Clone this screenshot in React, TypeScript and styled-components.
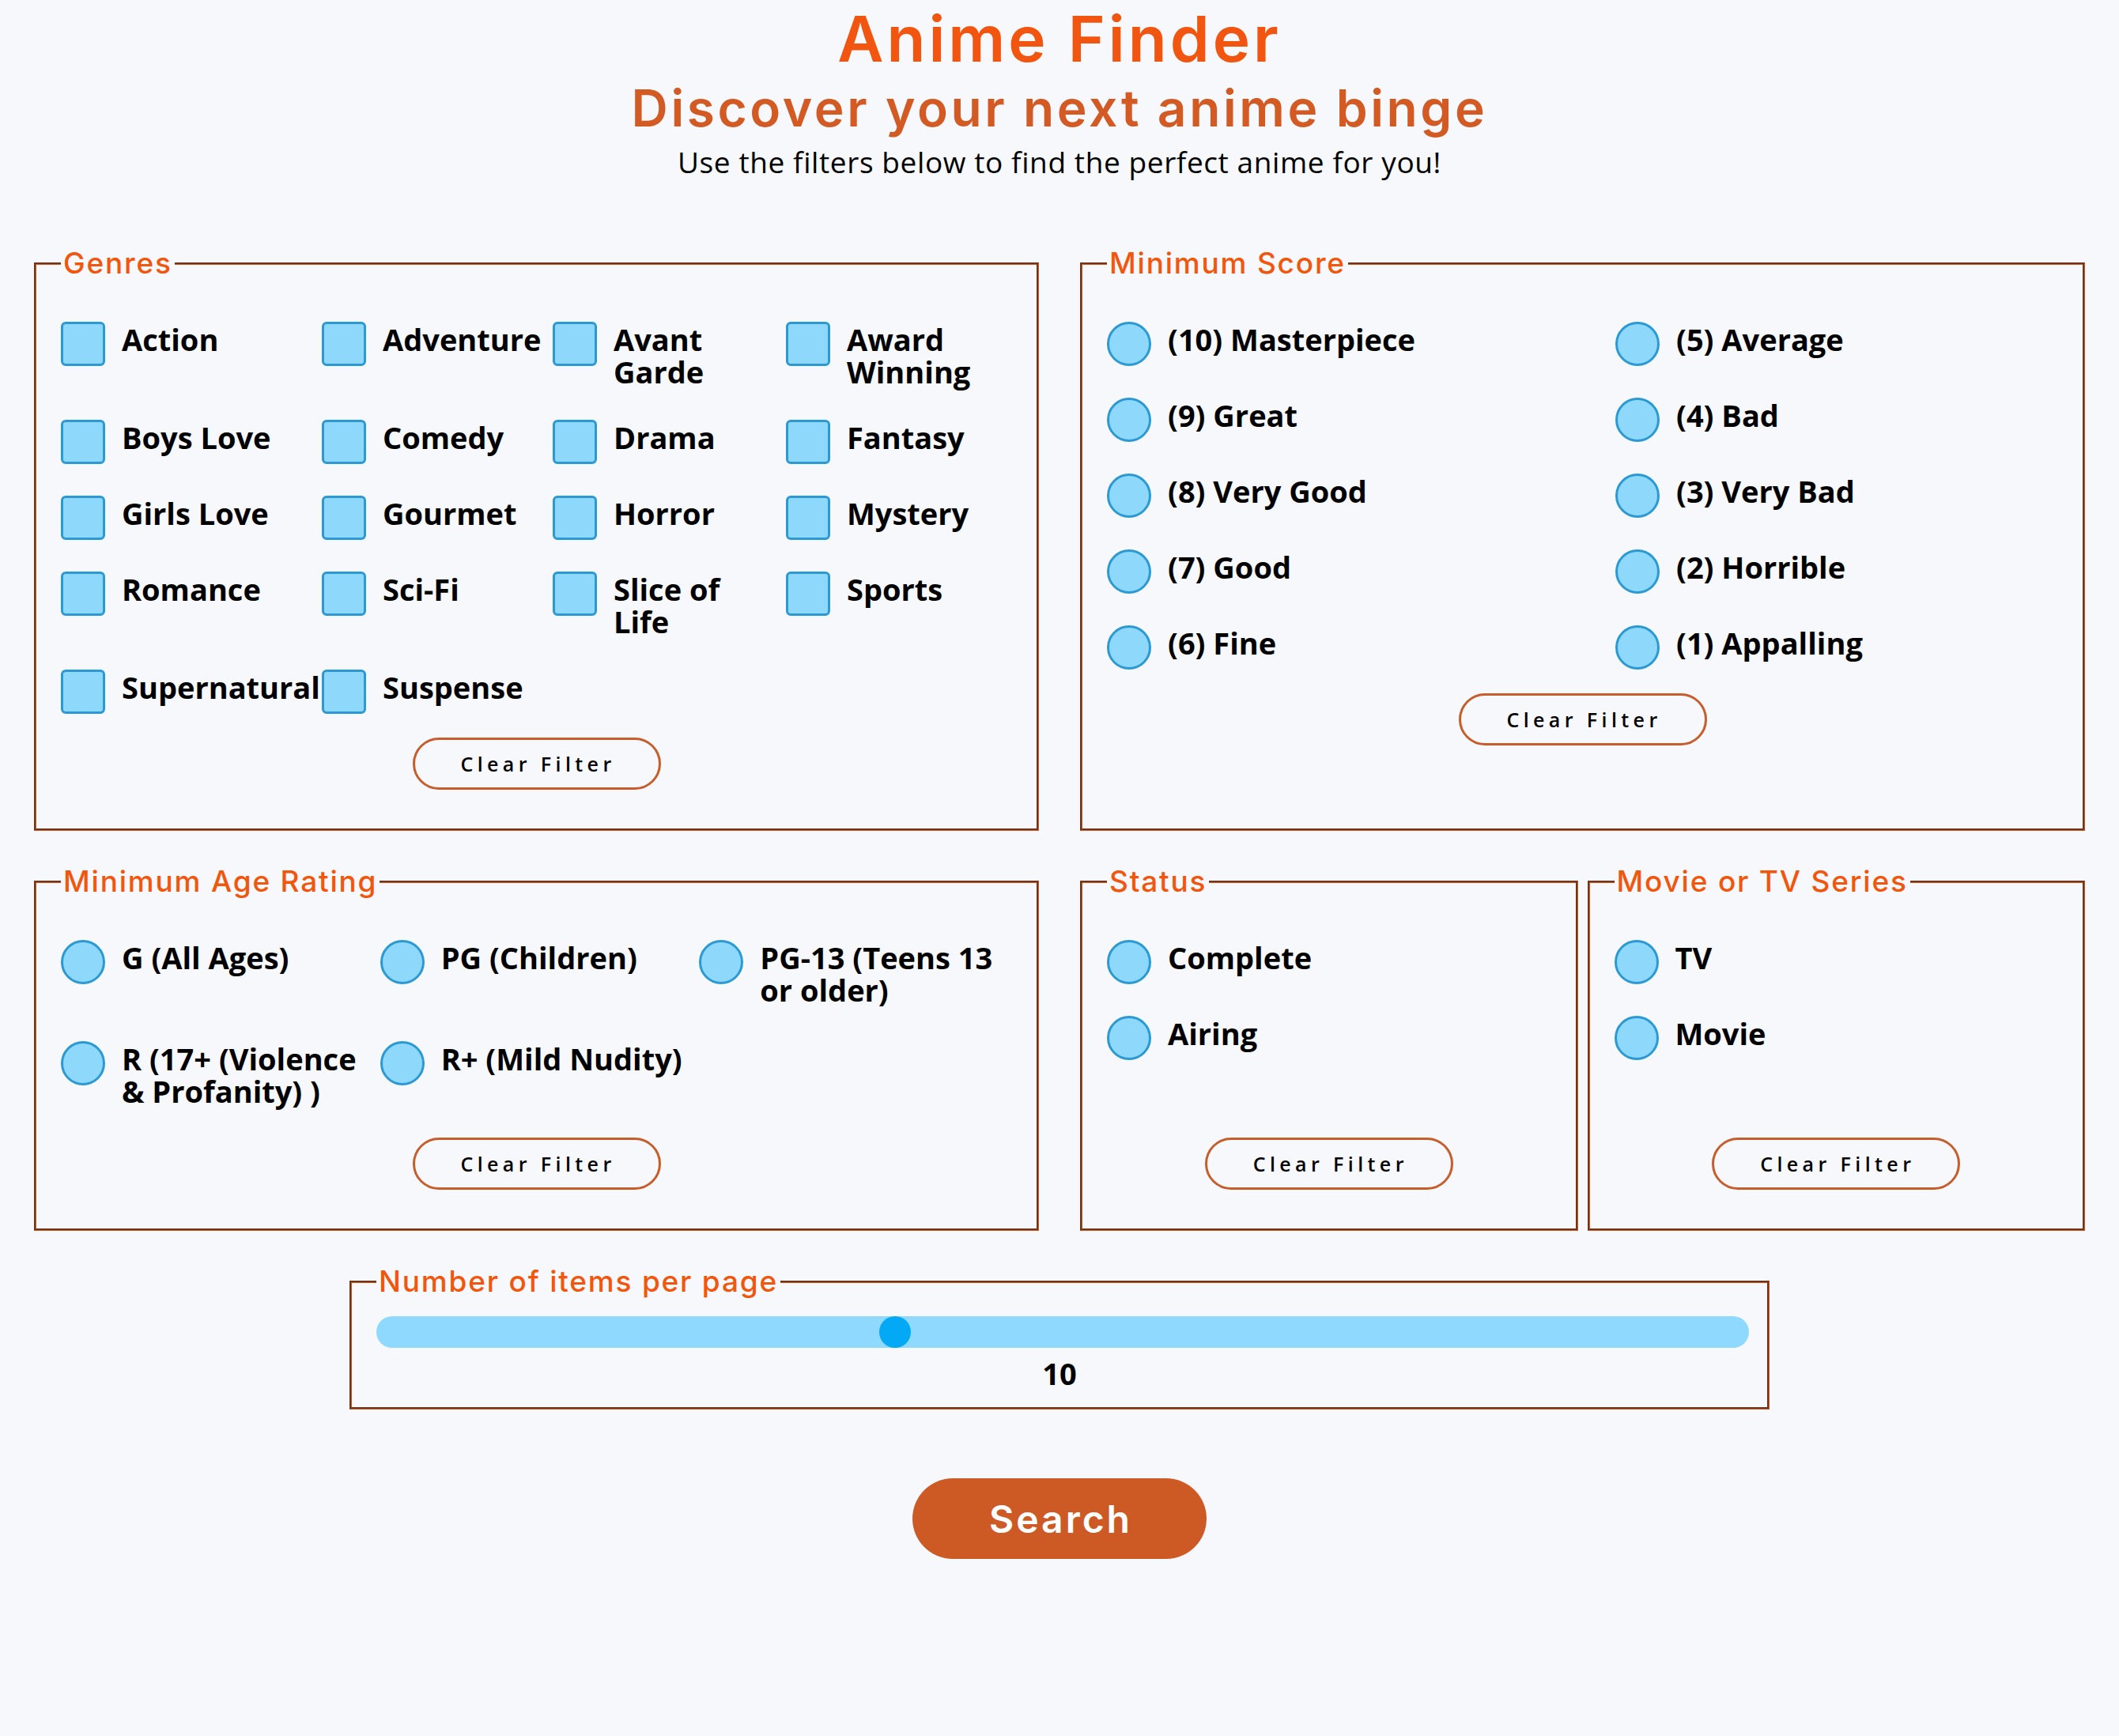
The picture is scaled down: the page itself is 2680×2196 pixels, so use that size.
import React, { useState } from 'react';
import styled, { createGlobalStyle, css } from 'styled-components';

const GlobalStyle = createGlobalStyle`
  html, body {
    margin: 0;
    padding: 0;
    background: #f7f8fc;
  }
  body {
    font-family: 'Open Sans', 'Noto Sans', sans-serif;
    color: #000;
  }
  *, *::before, *::after {
    box-sizing: border-box;
  }
`;

const Page = styled.main`
  display: flex;
  flex-direction: column;
  padding: 2px 43px 120px;
`;

const Header = styled.header`
  display: flex;
  flex-direction: column;
  align-items: center;
  text-align: center;
  margin-bottom: 86px;
`;

const Title = styled.h1`
  margin: 0;
  font-family: Inter, 'Open Sans', sans-serif;
  font-weight: 600;
  font-size: 80px;
  line-height: 93px;
  letter-spacing: 4px;
  color: #f2550f;
`;

const Subtitle = styled.h2`
  margin: 4px 0 0;
  font-family: Inter, 'Open Sans', sans-serif;
  font-weight: 600;
  font-size: 64px;
  line-height: 75px;
  letter-spacing: 3.6px;
  color: #d35a22;
`;

const Intro = styled.p`
  margin: 9px 0 0;
  font-family: 'Open Sans', sans-serif;
  font-weight: 400;
  font-size: 37px;
  line-height: 44px;
  letter-spacing: 0.6px;
`;

const Filters = styled.div`
  display: flex;
  flex-direction: column;
  gap: 44px;
`;

const FilterRow = styled.div`
  display: grid;
  grid-template-columns: 1fr 1fr;
  column-gap: 52px;
  align-items: stretch;
`;

const Pair = styled.div`
  display: flex;
  gap: 12px;
  align-items: stretch;
  & > fieldset {
    flex: 1 1 0;
  }
`;

const Panel = styled.fieldset`
  margin: 0;
  min-width: 0;
  border: 3px groove #c65a28;
  padding: 54px 31px 49px;
  display: flex;
  flex-direction: column;
`;

const SliderPanel = styled(Panel)`
  align-self: center;
  width: 1796px;
  padding: 24px 23px 22px 31px;
`;

const Legend = styled.legend`
  padding: 0 3px;
  font-family: Inter, 'Open Sans', sans-serif;
  font-weight: 500;
  font-size: 37px;
  line-height: 40px;
  letter-spacing: 1.8px;
  color: #f1560c;
`;

const OptionGrid = styled.div<{ $columns: string; $rowGap?: number; $colGap?: number }>`
  display: grid;
  grid-template-columns: ${(p) => p.$columns};
  row-gap: ${(p) => p.$rowGap ?? 40}px;
  column-gap: ${(p) => p.$colGap ?? 0}px;
  align-items: start;
`;

const Option = styled.label`
  display: flex;
  align-items: flex-start;
  gap: 21px;
  min-width: 0;
  cursor: pointer;
`;

const controlBase = css`
  appearance: none;
  -webkit-appearance: none;
  flex: none;
  margin: 0;
  width: 56px;
  height: 56px;
  border: 3px solid #2b99d2;
  background: #8ed8fc;
  cursor: pointer;
  &:checked {
    background: #03a9f4;
  }
`;

const CheckBox = styled.input.attrs({ type: 'checkbox' })`
  ${controlBase};
  border-radius: 6px;
`;

const Radio = styled.input.attrs({ type: 'radio' })`
  ${controlBase};
  border-radius: 50%;
`;

const OptionText = styled.span`
  margin-top: 2px;
  font-family: 'Open Sans', sans-serif;
  font-weight: 700;
  font-size: 38px;
  line-height: 41px;
`;

const ClearButton = styled.button<{ $pinned?: boolean; $space?: number }>`
  align-self: center;
  flex: none;
  margin-top: ${(p) => (p.$pinned ? 'auto' : `${p.$space ?? 30}px`)};
  width: 314px;
  height: 66px;
  padding: 0 0 0 4px;
  border: 3px solid #c65d2b;
  border-radius: 33px;
  background: transparent;
  font-family: 'Open Sans', sans-serif;
  font-weight: 600;
  font-size: 25px;
  letter-spacing: 5.4px;
  color: #000;
  cursor: pointer;
`;

const Range = styled.input.attrs({ type: 'range' })`
  -webkit-appearance: none;
  appearance: none;
  display: block;
  width: 100%;
  height: 40px;
  margin: 0;
  border-radius: 20px;
  background: #8ed9fd;
  outline: none;
  cursor: pointer;
  &::-webkit-slider-thumb {
    -webkit-appearance: none;
    appearance: none;
    width: 40px;
    height: 40px;
    border: none;
    border-radius: 50%;
    background: #03a9f4;
  }
  &::-moz-range-thumb {
    width: 40px;
    height: 40px;
    border: none;
    border-radius: 50%;
    background: #03a9f4;
  }
`;

const SliderValue = styled.output`
  display: block;
  margin-top: 12px;
  padding-right: 8px;
  text-align: center;
  font-family: 'Open Sans', sans-serif;
  font-weight: 700;
  font-size: 38px;
  line-height: 41px;
`;

const SearchButton = styled.button`
  align-self: center;
  margin-top: 87px;
  width: 372px;
  height: 102px;
  padding: 0 0 0 3px;
  border: none;
  border-radius: 51px;
  background: #cd5a24;
  color: #fff;
  font-family: Inter, 'Open Sans', sans-serif;
  font-weight: 600;
  font-size: 48px;
  letter-spacing: 3px;
  cursor: pointer;
`;

const genres = [
  'Action', 'Adventure', 'Avant Garde', 'Award Winning',
  'Boys Love', 'Comedy', 'Drama', 'Fantasy',
  'Girls Love', 'Gourmet', 'Horror', 'Mystery',
  'Romance', 'Sci-Fi', 'Slice of Life', 'Sports',
  'Supernatural', 'Suspense',
];

const scores = [
  '(10) Masterpiece', '(5) Average',
  '(9) Great', '(4) Bad',
  '(8) Very Good', '(3) Very Bad',
  '(7) Good', '(2) Horrible',
  '(6) Fine', '(1) Appalling',
];

const ratings = [
  'G (All Ages)', 'PG (Children)', 'PG-13 (Teens 13 or older)',
  'R (17+ (Violence & Profanity) )', 'R+ (Mild Nudity)',
];

const statuses = ['Complete', 'Airing'];
const types = ['TV', 'Movie'];

type RadioGroupProps = {
  name: string;
  items: string[];
  value: string;
  onChange: (v: string) => void;
};

const RadioOptions: React.FC<RadioGroupProps> = ({ name, items, value, onChange }) => (
  <>
    {items.map((item) => (
      <Option key={item}>
        <Radio name={name} checked={value === item} onChange={() => onChange(item)} />
        <OptionText>{item}</OptionText>
      </Option>
    ))}
  </>
);

export default function App() {
  const [selectedGenres, setSelectedGenres] = useState<string[]>([]);
  const [score, setScore] = useState('');
  const [rating, setRating] = useState('');
  const [status, setStatus] = useState('');
  const [type, setType] = useState('');
  const [perPage, setPerPage] = useState(10);

  const toggleGenre = (g: string) =>
    setSelectedGenres((prev) => (prev.includes(g) ? prev.filter((x) => x !== g) : [...prev, g]));

  return (
    <>
      <GlobalStyle />
      <Page>
        <Header>
          <Title>Anime Finder</Title>
          <Subtitle>Discover your next anime binge</Subtitle>
          <Intro>Use the filters below to find the perfect anime for you!</Intro>
        </Header>

        <Filters>
          <FilterRow>
            <Panel>
              <Legend>Genres</Legend>
              <OptionGrid $columns="316px 278px 281px 1fr" $colGap={14}>
                {genres.map((g) => (
                  <Option key={g}>
                    <CheckBox checked={selectedGenres.includes(g)} onChange={() => toggleGenre(g)} />
                    <OptionText>{g}</OptionText>
                  </Option>
                ))}
              </OptionGrid>
              <ClearButton onClick={() => setSelectedGenres([])}>Clear Filter</ClearButton>
            </Panel>

            <Panel>
              <Legend>Minimum Score</Legend>
              <OptionGrid $columns="643px 1fr">
                <RadioOptions name="score" items={scores} value={score} onChange={setScore} />
              </OptionGrid>
              <ClearButton onClick={() => setScore('')}>Clear Filter</ClearButton>
            </Panel>
          </FilterRow>

          <FilterRow>
            <Panel>
              <Legend>Minimum Age Rating</Legend>
              <OptionGrid $columns="repeat(3, 1fr)" $colGap={8} $rowGap={44}>
                <RadioOptions name="rating" items={ratings} value={rating} onChange={setRating} />
              </OptionGrid>
              <ClearButton $space={38} onClick={() => setRating('')}>Clear Filter</ClearButton>
            </Panel>

            <Pair>
              <Panel>
                <Legend>Status</Legend>
                <OptionGrid $columns="1fr">
                  <RadioOptions name="status" items={statuses} value={status} onChange={setStatus} />
                </OptionGrid>
                <ClearButton $pinned onClick={() => setStatus('')}>Clear Filter</ClearButton>
              </Panel>
              <Panel>
                <Legend>Movie or TV Series</Legend>
                <OptionGrid $columns="1fr">
                  <RadioOptions name="type" items={types} value={type} onChange={setType} />
                </OptionGrid>
                <ClearButton $pinned onClick={() => setType('')}>Clear Filter</ClearButton>
              </Panel>
            </Pair>
          </FilterRow>

          <SliderPanel>
            <Legend>Number of items per page</Legend>
            <Range
              min={1}
              max={25}
              value={perPage}
              onChange={(e: React.ChangeEvent<HTMLInputElement>) => setPerPage(Number(e.target.value))}
            />
            <SliderValue>{perPage}</SliderValue>
          </SliderPanel>
        </Filters>

        <SearchButton>Search</SearchButton>
      </Page>
    </>
  );
}
